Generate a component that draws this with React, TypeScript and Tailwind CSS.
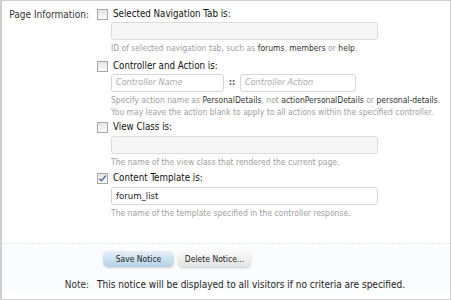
import React from "react"

const font = { fontFamily: '"DejaVu Sans Condensed", "DejaVu Sans", Tahoma, sans-serif' }

function Check({ checked = false }: { checked?: boolean }) {
  return (
    <span className="flex h-[11px] w-[11px] items-center justify-center border border-[#a8a8a8] bg-gradient-to-b from-[#e4e4e4] to-[#fcfcfc]">
      {checked && (
        <svg viewBox="0 0 10 10" className="h-[9px] w-[9px]">
          <path d="M1.5 5.2 L4 7.6 L8.6 1.8" fill="none" stroke="#4a5f9a" strokeWidth="1.5" />
        </svg>
      )}
    </span>
  )
}

function OptionHead({ label, checked }: { label: string; checked?: boolean }) {
  return (
    <div className="flex h-[16px] items-center gap-[5px]">
      <Check checked={checked} />
      <span className="text-[9.7px] text-[#111]">{label}</span>
    </div>
  )
}

function Hint({ children }: { children: React.ReactNode }) {
  return <div className="pl-[14px] text-[8.5px] leading-[12px] text-[#a0a0a0]">{children}</div>
}

const B = ({ children }: { children: React.ReactNode }) => <span className="text-[#333]">{children}</span>

export default function App() {
  return (
    <div style={font} className="h-[300px] w-[451px] overflow-hidden border border-l-2 border-[#cfcfcf] bg-white">
      <div className="flex pt-[5px]">
        <div className="w-[95px] pr-[8px] text-right">
          <div className="flex h-[16px] items-center justify-end text-[10px] text-[#333]">Page Information:</div>
        </div>
        <div className="flex flex-col">
          <OptionHead label="Selected Navigation Tab is:" />
          <div className="ml-[14px] h-[18px] w-[267px] rounded-[3px] border border-[#dcdcdc] bg-[#f6f6f6]" />
          <div className="flex h-[16px] items-center">
            <Hint>
              ID of selected navigation tab, such as <B>forums</B>, <B>members</B> or <B>help</B>.
            </Hint>
          </div>

          <div className="mt-[2px]">
            <OptionHead label="Controller and Action is:" />
          </div>
          <div className="ml-[14px] flex items-center">
            <div className="flex h-[18px] w-[113px] items-center rounded-[3px] border border-[#d6d6d6] bg-white px-[4px] text-[9px] italic text-[#aaa]">
              Controller Name
            </div>
            <span className="w-[16px] text-center text-[9px] font-bold text-[#555]">::</span>
            <div className="flex h-[18px] w-[116px] items-center rounded-[3px] border border-[#d6d6d6] bg-white px-[4px] text-[9px] italic text-[#aaa]">
              Controller Action
            </div>
          </div>
          <div className="pt-[2px]">
            <Hint>
              Specify action name as <B>PersonalDetails</B>, not <B>actionPersonalDetails</B> or <B>personal-details</B>.
            </Hint>
            <Hint>You may leave the action blank to apply to all actions within the specified controller.</Hint>
          </div>

          <div className="mt-[1px]">
            <OptionHead label="View Class is:" />
          </div>
          <div className="ml-[14px] mt-[1px] h-[18px] w-[267px] rounded-[3px] border border-[#dcdcdc] bg-[#f6f6f6]" />
          <div className="flex h-[16px] items-center">
            <Hint>The name of the view class that rendered the current page.</Hint>
          </div>

          <OptionHead label="Content Template is:" checked />
          <div className="ml-[14px] mt-[1px] flex h-[18px] w-[267px] items-center rounded-[3px] border border-[#d6d6d6] bg-white px-[4px] text-[9.5px] text-[#222]">
            forum_list
          </div>
          <div className="flex h-[16px] items-center">
            <Hint>The name of the template specified in the controller response.</Hint>
          </div>
        </div>
      </div>

      <div className="mt-[22px] border-t border-dashed border-[#e2e9f0] bg-[#fbfcfe] pt-[7px]">
        <div className="flex gap-[4px] pl-[101px]">
          <button className="h-[16px] w-[71px] rounded-[5px] bg-gradient-to-b from-[#e6f0f8] to-[#b4d2e8] text-[8.5px] text-[#222] shadow-[0_1px_2px_rgba(0,0,0,0.18)]">
            Save Notice
          </button>
          <button className="h-[16px] w-[73px] rounded-[5px] bg-gradient-to-b from-[#fbfbfb] to-[#e3e3e3] text-[8.5px] text-[#222] shadow-[0_1px_2px_rgba(0,0,0,0.2)]">
            Delete Notice...
          </button>
        </div>
        <div className="mt-[9px] flex h-[16px] items-center">
          <div className="w-[95px] pr-[8px] text-right text-[10px] text-[#333]">Note:</div>
          <div className="text-[10px] text-[#222]">This notice will be displayed to all visitors if no criteria are specified.</div>
        </div>
      </div>
    </div>
  )
}
